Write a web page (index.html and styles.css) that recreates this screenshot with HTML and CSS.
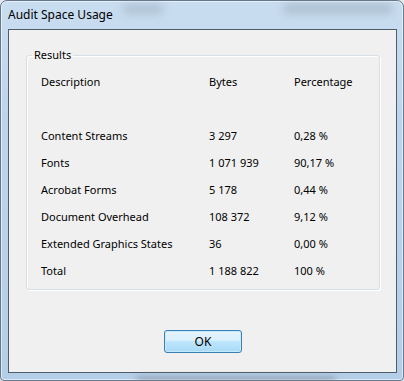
FILE: index.html
```
<!DOCTYPE html>
<html>
<head>
    <link rel="stylesheet" href="styles.css">
</head>
<body>
<div class="window">
    <div class="titlebar">
        <span class="glass-blur blur-a"></span>
        <span class="glass-blur blur-b"></span>
        <span class="title">Audit Space Usage</span>
    </div>

    <div class="client">
        <fieldset class="group">
            <legend>Results</legend>
            <div class="results">
                <div>Description</div><div>Bytes</div><div>Percentage</div>
                <div class="blank"></div><div class="blank"></div><div class="blank"></div>
                <div>Content Streams</div><div>3 297</div><div>0,28 %</div>
                <div>Fonts</div><div>1 071 939</div><div>90,17 %</div>
                <div>Acrobat Forms</div><div>5 178</div><div>0,44 %</div>
                <div>Document Overhead</div><div>108 372</div><div>9,12 %</div>
                <div>Extended Graphics States</div><div>36</div><div>0,00 %</div>
                <div>Total</div><div>1 188 822</div><div>100 %</div>
            </div>
        </fieldset>

        <div class="buttons">
            <button class="ok">OK</button>
        </div>
    </div>

    <span class="glass-blur blur-bottom"></span>
</div>
</body>
</html>
```

FILE: styles.css
```
body {
    margin: 0;
    padding: 0;
    background: #e4e8ec;
    font-family: "Segoe UI", "Noto Sans", sans-serif;
    font-size: 11px;
    color: #000;
}

.window {
    position: relative;
    box-sizing: border-box;
    width: 404px;
    height: 381px;
    padding: 0 6px 7px 7px;
    border: 1px solid #66788c;
    border-radius: 7px 7px 4px 4px;
    background: linear-gradient(to bottom, #c9ddf0 0%, #bdd5ec 30%, #b5cee8 100%);
    box-shadow: inset 0 0 0 1px rgba(255, 255, 255, 0.55);
    overflow: hidden;
}

.titlebar {
    position: relative;
    height: 28px;
    display: flex;
    align-items: center;
}

.title {
    position: relative;
    font-size: 12px;
    padding-bottom: 2px;
}

.glass-blur {
    position: absolute;
    background: rgba(110, 125, 140, 0.35);
    filter: blur(5px);
    border-radius: 6px;
}

.blur-a {
    left: 115px;
    top: 4px;
    width: 40px;
    height: 8px;
}

.blur-b {
    left: 275px;
    top: 3px;
    width: 110px;
    height: 9px;
}

.blur-bottom {
    left: 135px;
    bottom: -2px;
    width: 200px;
    height: 5px;
    background: rgba(90, 100, 115, 0.45);
    filter: blur(3px);
}

.client {
    box-sizing: border-box;
    height: 344px;
    border: 1px solid #4e5c6c;
    background: #f0f0f0;
    display: flex;
    flex-direction: column;
    padding: 17px 16px 0 17px;
}

.group {
    margin: 0;
    padding: 5px 14px 5px 14px;
    border: 1px solid #d5dfe5;
    border-radius: 3px;
    box-shadow: inset 1px 1px 0 #fff, 1px 1px 0 #fff;
}

.group legend {
    padding: 0 2px;
    margin-left: -9px;
    line-height: 16px;
}

.results {
    display: grid;
    grid-template-columns: 168px 85px auto;
    grid-auto-rows: 27px;
    align-items: center;
}

.buttons {
    display: flex;
    justify-content: center;
    padding-top: 40px;
}

.ok {
    width: 78px;
    height: 23px;
    font-family: inherit;
    font-size: 12px;
    color: #000;
    border: 1px solid #3c7fb1;
    border-radius: 3px;
    background: linear-gradient(to bottom, #e5f4fc 0%, #d9f0fc 45%, #bee6fd 50%, #a7d9f5 100%);
    box-shadow: inset 0 0 0 1px #c4eafc;
    padding: 0;
}
```
